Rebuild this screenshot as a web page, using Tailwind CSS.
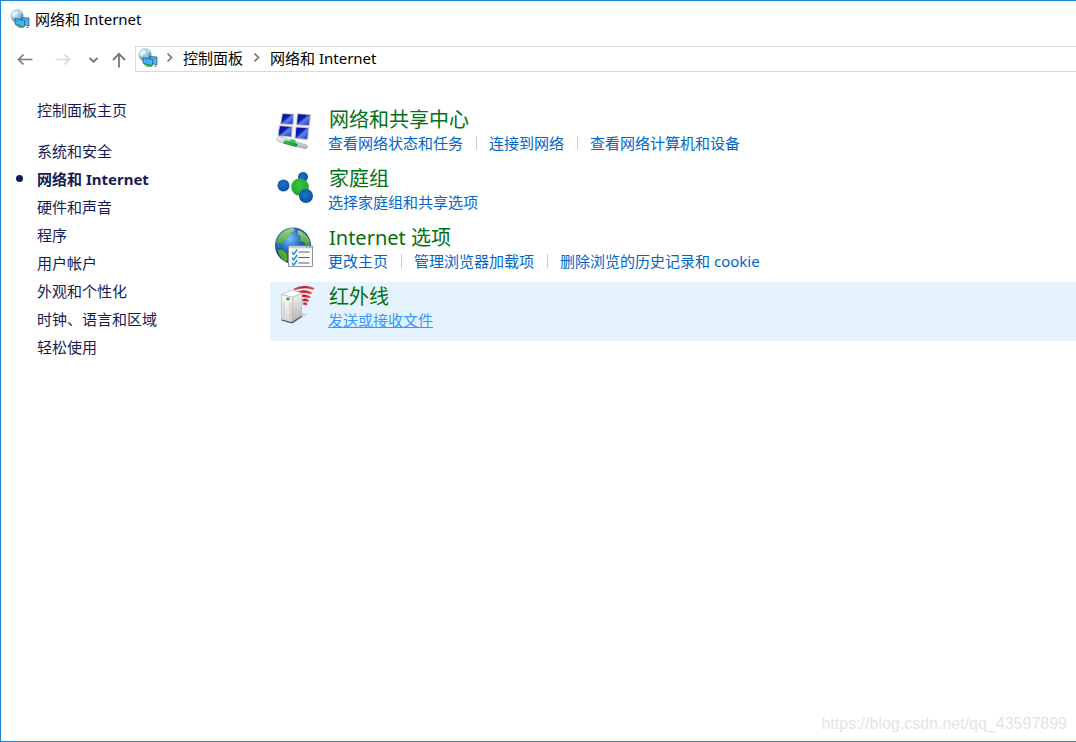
<!DOCTYPE html>
<html lang="zh-CN">
<head>
<meta charset="utf-8">
<meta name="viewport" content="width=device-width, initial-scale=1">
<title>网络和 Internet</title>
<script src="https://cdn.jsdelivr.net/npm/@tailwindcss/browser@4"></script>
</head>
<body class="flex min-h-screen flex-col border-t border-b border-l border-[#1883d7] bg-white font-['Noto_Sans','Noto_Sans_CJK_SC',sans-serif] text-[15px] leading-5 text-black">
<svg class="absolute size-0" aria-hidden="true">
  <defs>
    <radialGradient id="sky" cx=".35" cy=".3" r=".75"><stop offset="0" stop-color="#dcf0f8"/><stop offset=".55" stop-color="#8fc3dc"/><stop offset="1" stop-color="#3d85aa"/></radialGradient>
    <linearGradient id="screen" x1="0" y1="0" x2="1" y2="1"><stop offset="0" stop-color="#3aa4ee"/><stop offset="1" stop-color="#52b8fb"/></linearGradient>
    <linearGradient id="pane" x1="0" y1="0" x2="1" y2="1"><stop offset="0" stop-color="#0a12a8"/><stop offset=".4" stop-color="#1018a4"/><stop offset=".55" stop-color="#5f83e6"/><stop offset="1" stop-color="#1a2cc0"/></linearGradient>
    <linearGradient id="pipe" x1="0" y1="0" x2="0" y2="1"><stop offset="0" stop-color="#f4f6f7"/><stop offset="1" stop-color="#a9b2b7"/></linearGradient>
    <linearGradient id="plug" x1="0" y1="0" x2="0" y2="1"><stop offset="0" stop-color="#4fd26b"/><stop offset="1" stop-color="#078a2b"/></linearGradient>
    <radialGradient id="blue" cx=".45" cy=".4" r=".6"><stop offset="0" stop-color="#1b74c8"/><stop offset="1" stop-color="#0a519e"/></radialGradient>
    <radialGradient id="green" cx=".45" cy=".4" r=".6"><stop offset="0" stop-color="#3fc444"/><stop offset="1" stop-color="#1fa32c"/></radialGradient>
    <radialGradient id="ocean" cx=".4" cy=".3" r=".75"><stop offset="0" stop-color="#79c5f5"/><stop offset=".45" stop-color="#2466bd"/><stop offset="1" stop-color="#12347f"/></radialGradient>
    <linearGradient id="land" x1="0" y1="0" x2="0" y2="1"><stop offset="0" stop-color="#a4d27c"/><stop offset="1" stop-color="#3f9e2c"/></linearGradient>
    <linearGradient id="front" x1="0" y1="0" x2="0" y2="1"><stop offset="0" stop-color="#fafafa"/><stop offset="1" stop-color="#d6d6d6"/></linearGradient>
    <linearGradient id="side" x1="0" y1="0" x2="0" y2="1"><stop offset="0" stop-color="#f0f0f0"/><stop offset="1" stop-color="#b4b4b4"/></linearGradient>
    <linearGradient id="wave" x1="0" y1="0" x2="1" y2="0"><stop offset="0" stop-color="#e05a62"/><stop offset=".5" stop-color="#c0141f"/><stop offset="1" stop-color="#d4606a"/></linearGradient>
    <symbol id="net" viewBox="0 0 20 20">
      <circle cx="7" cy="6.800" r="6.500" fill="url(#sky)"/>
      <path d="M2 4.500l3-2 3 .5-1 2-2 1-1 2-2-.5zM9 1.500l3 2-2 1z" fill="#eef8fb" opacity=".8"/>
      <path d="M5.500 16.500l3-1 6 2-1 1.500-4 0z" fill="#4cc04a"/>
      <path d="M11.500 8.500l7.500.500v8l-7.500-2z" fill="url(#screen)" stroke="#285574" stroke-width=".7"/>
      <path d="M5 9.500l9.500 2v6.200l-9.500-2.500z" fill="url(#screen)" stroke="#285574" stroke-width=".7"/>
      <path d="M16 18l2.500-.5v1l-2 .5z" fill="#63717a"/>
    </symbol>
  </defs>
</svg>

<header>
  <div class="mb-[2px] flex h-[35px] items-center gap-[5px] pl-[9px]">
    <svg class="size-5" aria-hidden="true"><use href="#net"/></svg>
    <h1>网络和 Internet</h1>
  </div>
  <div class="flex items-center pt-2">
    <nav class="flex w-[134px] shrink-0 items-center pt-[2px] pl-4" aria-label="导航">
      <button class="w-[38px]" aria-label="后退"><svg class="h-4 w-4" viewBox="0 0 16 16" fill="none" stroke="#777" stroke-width="1.700"><path d="M15.500 7.500H1M6.500 2.500L1.500 7.500 6.500 12.500"/></svg></button>
      <button class="w-8" aria-label="前进" disabled><svg class="h-4 w-4" viewBox="0 0 16 16" fill="none" stroke="#d9d9d9" stroke-width="1.700"><path d="M.5 7.500H15M9.500 2.500L14.500 7.500 9.500 12.500"/></svg></button>
      <button class="w-6" aria-label="最近位置"><svg class="h-4 w-3" viewBox="0 0 12 16" fill="none" stroke="#777" stroke-width="1.800"><path d="M2.500 6L6.500 9.700 10.500 6"/></svg></button>
      <button class="w-4" aria-label="上移"><svg class="h-4 w-4" viewBox="0 0 16 16" fill="none" stroke="#777" stroke-width="1.800"><path d="M8 15.500V2M2 8L8 1.800 14 8"/></svg></button>
    </nav>
    <div class="flex h-[26px] min-w-0 flex-1 items-center border-y border-l border-[#d9d9d9] pb-[2px] pl-[2px]">
      <svg class="size-5 shrink-0" aria-hidden="true"><use href="#net"/></svg>
      <svg class="mr-[9px] ml-2 h-3 w-2" viewBox="0 0 8 12" fill="none" stroke="#777" stroke-width="1.700" aria-hidden="true"><path d="M1.500 1.500L5.500 5.500 1.500 9.500"/></svg>
      <a href="#" class="whitespace-nowrap">控制面板</a>
      <svg class="mr-[9px] ml-[10px] h-3 w-2" viewBox="0 0 8 12" fill="none" stroke="#777" stroke-width="1.700" aria-hidden="true"><path d="M1.500 1.500L5.500 5.500 1.500 9.500"/></svg>
      <a href="#" class="whitespace-nowrap">网络和 Internet</a>
    </div>
  </div>
</header>

<div class="flex flex-1 pt-[33px]">
  <nav class="w-[269px] shrink-0 pl-9 text-[#151c55]" aria-label="类别">
    <a href="#" class="-mt-[5px] block">控制面板主页</a>
    <ul class="mt-[17px] leading-7">
      <li><a href="#">系统和安全</a></li>
      <li class="relative font-bold"><span class="absolute top-[10px] -left-[21px] size-[7px] rounded-full bg-[#151c55]"></span><a href="#" aria-current="page">网络和 Internet</a></li>
      <li><a href="#">硬件和声音</a></li>
      <li><a href="#">程序</a></li>
      <li><a href="#">用户帐户</a></li>
      <li><a href="#">外观和个性化</a></li>
      <li><a href="#">时钟、语言和区域</a></li>
      <li><a href="#">轻松使用</a></li>
    </ul>
  </nav>

  <main class="min-w-0 flex-1 text-[#0066cc]">
    <section class="flex h-[59px] gap-2 pl-1">
      <svg class="mt-[5px] size-[46px] shrink-0" viewBox="4 5 46 46" aria-hidden="true">
        <path d="M12 8l29.500 1-3 27L9 32z" fill="#f1f3f5"/>
        <g fill="url(#pane)" stroke="#d0d5da" stroke-width=".8">
          <path d="M12.500 8.500l11.500.7-1 10.500-12.500-.7z"/><path d="M27.500 8.700l13.200.8-1.500 11.200-12.700-.8z"/>
          <path d="M9.500 20.700l13 .8-1 10.500-13.500-1z"/><path d="M26 22l13 .7-1.500 11.800-12.500-1z"/>
        </g>
        <path d="M7 33q.8-1.500 2.500-1.200l26 7.700q2.500.8 2 2.800-.8 2-3.500 1.200L8 36.500q-1.800-.7-1-3.500z" fill="url(#pipe)" stroke="#8d979d" stroke-width=".5"/>
        <path d="M20.500 34l5 1-.5 2.500 3 1.500-1.500 3-13.500-3.500 1.500-3.500 5.500 1z" fill="url(#plug)"/>
      </svg>
      <div class="min-w-0">
        <h2 class="pl-px text-xl leading-[30px] text-[#007011]"><a href="#">网络和共享中心</a></h2>
        <div class="flex items-center leading-4 whitespace-nowrap"><a href="#">查看网络状态和任务</a><i class="mr-3 ml-[13px] h-[14px] w-px bg-[#ccc]"></i><a href="#">连接到网络</a><i class="mr-3 ml-[13px] h-[14px] w-px bg-[#ccc]"></i><a href="#">查看网络计算机和设备</a></div>
      </div>
    </section>
    <section class="flex h-[59px] gap-2 pl-1">
      <svg class="mt-[5px] size-[46px] shrink-0" viewBox="4 4 46 46" aria-hidden="true">
        <circle cx="33" cy="12" r="5" fill="url(#blue)"/><circle cx="13.500" cy="20.500" r="6" fill="url(#blue)"/><circle cx="30" cy="22" r="8.800" fill="url(#green)"/><circle cx="36" cy="31" r="7" fill="url(#blue)"/>
      </svg>
      <div class="min-w-0">
        <h2 class="pl-px text-xl leading-[30px] text-[#007011]"><a href="#">家庭组</a></h2>
        <div class="leading-4"><a href="#">选择家庭组和共享选项</a></div>
      </div>
    </section>
    <section class="flex h-[59px] gap-2 pl-1">
      <svg class="mt-1 size-[46px] shrink-0" viewBox="4 5 46 46" aria-hidden="true">
        <circle cx="23" cy="23.500" r="18" fill="url(#ocean)"/>
        <path d="M10 13q5-6 12-7l3 1.500-2 2-3 1 1 2-3 2-2 3-3 1-1 3-3-1-1 2 3 3-3-1-1.500-4q.5-4 3.500-7.500z" fill="url(#land)"/>
        <path d="M28 8q8 3 11.500 10l.5 5-4 1-2-4-4-1 1-4-3-3z" fill="url(#land)"/>
        <path d="M8 28l5 0 4 4 .500 7-3 0Q9 35 8 28z" fill="#53a82f"/>
        <path d="M18.500 24h24v20.500h-24z" fill="#f9fafb" stroke="#8b959b"/>
        <path d="M19 25.500h23" stroke="#c6ccd0" stroke-width="1.500"/><path d="M36 25h1.500M39.500 25H41" stroke="#6c7479"/>
        <path d="M28.500 30h11M28.500 35.500h11M28.500 41h11" stroke="#596268"/>
        <path d="M22 30.300l1.700 2 3.500-4.800M22 35.800l1.700 2 3.500-4.800M22 41l1.700 2 3.500-4.800" fill="none" stroke="#2b93d1" stroke-width="1.500"/>
      </svg>
      <div class="min-w-0">
        <h2 class="pl-px text-xl leading-[30px] text-[#007011]"><a href="#">Internet 选项</a></h2>
        <div class="flex items-center leading-4 whitespace-nowrap"><a href="#">更改主页</a><i class="mr-3 ml-[13px] h-[14px] w-px bg-[#ccc]"></i><a href="#">管理浏览器加载项</a><i class="mr-3 ml-[13px] h-[14px] w-px bg-[#ccc]"></i><a href="#">删除浏览的历史记录和 cookie</a></div>
      </div>
    </section>
    <section class="flex h-[59px] gap-2 bg-[#e5f3ff] pl-1">
      <svg class="mt-[3px] size-[46px] shrink-0" viewBox="8 5 46 46" aria-hidden="true">
        <path d="M20 42l16-9 6 1-14 9z" fill="#9eabb5" opacity=".45"/>
        <g fill="none" stroke="url(#wave)" stroke-width="2.400"><path d="M28 9.500Q39 5 48 9"/><path d="M30 13.200q8-3.500 15.500.2"/><path d="M32.500 16.900q6-2.700 11.500.6"/><path d="M36 20.500q4-1.800 6.500.8"/><path d="M37 24q2.500-1.200 4 .7"/></g>
        <path d="M15.500 14.500l11 2.500-.5 25.500L15.500 40z" fill="url(#front)" stroke="#aaa" stroke-width=".6"/>
        <path d="M26.500 17L36 13.500l-.5 22.500-9.500 6.500z" fill="url(#side)" stroke="#aaa" stroke-width=".5"/>
        <path d="M15.500 14.500l10-4.500L36 13l-9.500 4z" fill="#fff" stroke="#b0b0b0" stroke-width=".6"/>
        <path d="M18 21.500v17.500M24 23v17" stroke="#c8c8c8"/>
        <ellipse cx="22" cy="19" rx="1.900" ry="1.400" fill="#39a653"/>
        <path d="M15.500 40l10.500 2.800 9.500-6.500" fill="none" stroke="#555" stroke-width="1.200"/>
      </svg>
      <div class="min-w-0">
        <h2 class="pl-px text-xl leading-[30px] text-[#007011]"><a href="#">红外线</a></h2>
        <div class="leading-4"><a href="#" class="text-[#3399ff] underline">发送或接收文件</a></div>
      </div>
    </section>
  </main>
</div>
<footer class="pr-[9px] pb-[7px] text-right font-['Liberation_Sans',sans-serif] text-base leading-5 text-[#e4e4e4]">https://blog.csdn.net/qq_43597899</footer>
</body>
</html>
